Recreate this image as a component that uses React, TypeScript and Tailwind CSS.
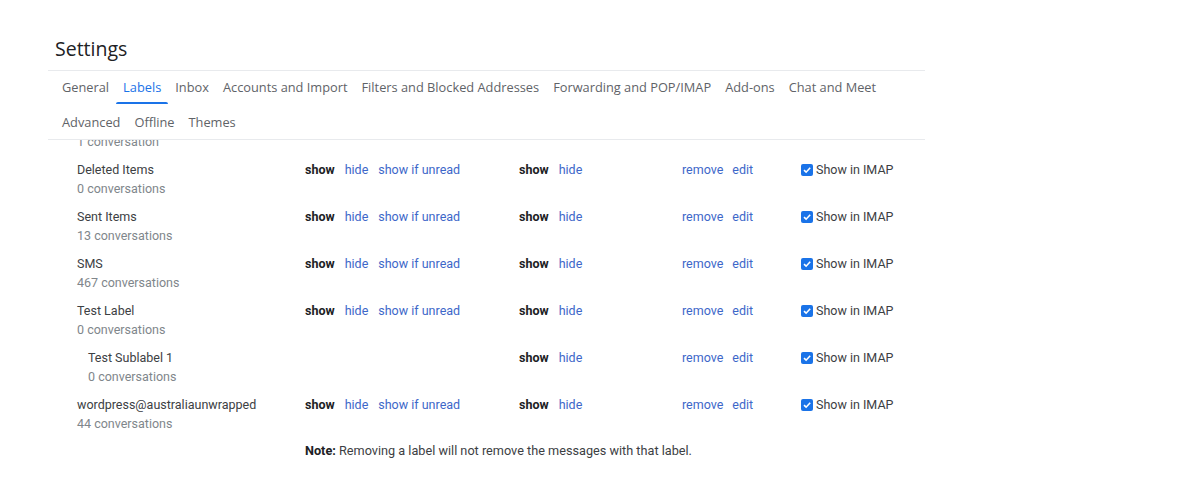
import React from "react";

const tabsRow1 = ["General", "Labels", "Inbox", "Accounts and Import", "Filters and Blocked Addresses", "Forwarding and POP/IMAP", "Add-ons", "Chat and Meet"];
const tabsRow2 = ["Advanced", "Offline", "Themes"];

type Row = { name: string; count: string; sub?: boolean; showGroup: boolean };

const rows: Row[] = [
  { name: "Drafts", count: "1 conversation", showGroup: true },
  { name: "Deleted Items", count: "0 conversations", showGroup: true },
  { name: "Sent Items", count: "13 conversations", showGroup: true },
  { name: "SMS", count: "467 conversations", showGroup: true },
  { name: "Test Label", count: "0 conversations", showGroup: true },
  { name: "Test Sublabel 1", count: "0 conversations", sub: true, showGroup: false },
  { name: "wordpress@australiaunwrapped", count: "44 conversations", showGroup: true },
];

function Tab({ label }: { label: string }) {
  const active = label === "Labels";
  return (
    <div className="relative flex items-center px-[7px] h-full">
      <span className={active ? "text-[#1a73e8]" : "text-[#5f6368]"}>{label}</span>
      {active && <div className="absolute left-0 right-0 bottom-0 h-[2px] bg-[#1a73e8] rounded-t" />}
    </div>
  );
}

function Check() {
  return (
    <span className="w-[12px] h-[12px] rounded-[2px] bg-[#1a73e8] flex items-center justify-center">
      <svg width="10" height="10" viewBox="0 0 10 10">
        <path d="M2 5.2 L4.1 7.2 L8.2 2.8" stroke="white" strokeWidth="1.6" fill="none" />
      </svg>
    </span>
  );
}

export default function App() {
  return (
    <div className="w-[1200px] h-[500px] bg-white overflow-hidden" style={{ fontFamily: "Roboto, 'Liberation Sans', sans-serif" }}>
      <div className="ml-[48px] w-[877px]">
        <div className="h-[70px] flex items-center pl-[7px] pt-[27px] text-[19.5px] text-[#202124]" style={{ fontFamily: "'Open Sans', Roboto, sans-serif" }}>
          Settings
        </div>
        <div className="border-t border-b border-[#e8eaed] pl-[7px] text-[12.8px]" style={{ fontFamily: "'Open Sans', Roboto, sans-serif" }}>
          <div className="flex h-[33px] gap-0">
            {tabsRow1.map((t) => (
              <Tab key={t} label={t} />
            ))}
          </div>
          <div className="flex h-[35px] pt-[2px]">
            {tabsRow2.map((t) => (
              <Tab key={t} label={t} />
            ))}
          </div>
        </div>
        <div className="h-[361px] overflow-hidden text-[12.5px]">
          <div className="-mt-[32px]">
            {rows.map((r) => (
              <div key={r.name} className="h-[47px] pt-[5px] flex">
                <div className={`w-[257px] ${r.sub ? "pl-[40px]" : "pl-[29px]"}`}>
                  <div className="h-[19px] leading-[19px] text-[#3c4043]">{r.name}</div>
                  <div className="h-[19px] leading-[19px] text-[#80868b]">{r.count}</div>
                </div>
                <div className="w-[214px] h-[19px] leading-[19px] flex gap-[10px]">
                  {r.showGroup && (
                    <>
                      <span className="font-bold text-[#202124]">show</span>
                      <span className="text-[#3d67c9]">hide</span>
                      <span className="text-[#3d67c9]">show if unread</span>
                    </>
                  )}
                </div>
                <div className="w-[163px] h-[19px] leading-[19px] flex gap-[10px]">
                  <span className="font-bold text-[#202124]">show</span>
                  <span className="text-[#3d67c9]">hide</span>
                </div>
                <div className="w-[119px] h-[19px] leading-[19px] flex gap-[9px]">
                  <span className="text-[#3d67c9]">remove</span>
                  <span className="text-[#3d67c9]">edit</span>
                </div>
                <div className="h-[19px] leading-[19px] flex items-center gap-[3px] text-[#3c4043]">
                  <Check />
                  <span>Show in IMAP</span>
                </div>
              </div>
            ))}
            <div className="pl-[257px] pt-[4px] h-[19px] leading-[19px] text-[12.7px] text-[#3c4043]">
              <span className="font-bold text-[#202124]">Note:</span> Removing a label will not remove the messages with that label.
            </div>
          </div>
        </div>
      </div>
    </div>
  );
}
